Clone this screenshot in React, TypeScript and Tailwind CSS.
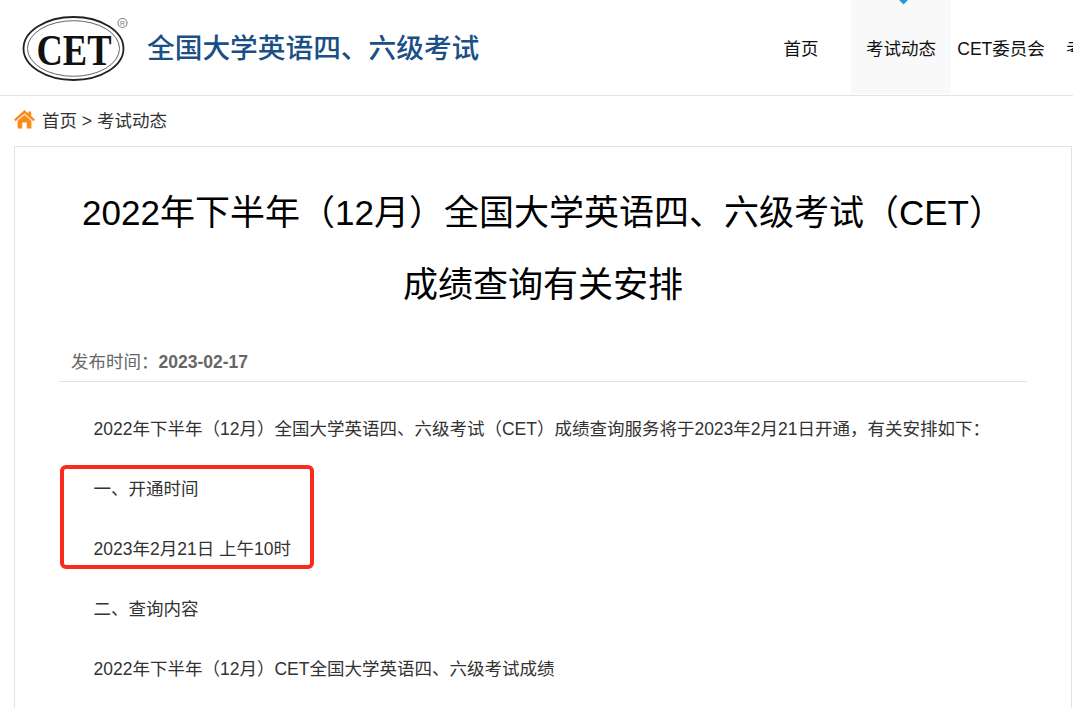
const NAV = ["首页", "考试动态", "CET委员会", "考试介绍"];

function Logo() {
  return (
    <svg width="112" height="72" viewBox="0 0 112 72" className="shrink-0">
      <ellipse cx="51.5" cy="35.5" rx="50" ry="31.5" fill="#fff" stroke="#222" strokeWidth="1.8" />
      <ellipse cx="51.5" cy="35.5" rx="46" ry="27.8" fill="#fff" stroke="#666" strokeWidth="1" />
      <text x="52" y="51.5" textAnchor="middle" fontFamily="'Liberation Serif', serif" fontWeight="700" fontSize="44" fill="#111" textLength="75" lengthAdjust="spacingAndGlyphs">CET</text>
      <circle cx="100.5" cy="10" r="4.5" fill="#fff" stroke="#888" strokeWidth="1.2" />
      <text x="100.5" y="12.8" textAnchor="middle" fontFamily="'Liberation Sans', sans-serif" fontSize="7" fill="#777">R</text>
    </svg>
  );
}

function HomeIcon() {
  return (
    <svg width="21" height="19" viewBox="0 0 21 19" className="shrink-0">
      <path d="M10.5 0 L0 9.4 L1.6 11.2 L10.5 3.4 L19.4 11.2 L21 9.4 L17.2 6 V1.4 H14.4 V3.5 Z" fill="#fb8c1c" />
      <path d="M10.5 4.8 L3.6 10.8 V18.5 H8.2 V12.6 H12.8 V18.5 H17.4 V10.8 Z" fill="#fb8c1c" />
    </svg>
  );
}

export default function App() {
  return (
    <div className="relative h-[708px] w-[1073px] overflow-hidden bg-white font-['Liberation_Sans','Noto_Sans_CJK_SC',sans-serif]">
      <header className="flex h-[96px] border-b border-[#e3e3e3]">
        <div className="flex w-[751px] shrink-0 items-center pl-[22px] pt-[2px]">
          <Logo />
          <span className="ml-[13px] whitespace-nowrap text-[27.7px] font-medium leading-none text-[#1a5086]">全国大学英语四、六级考试</span>
        </div>
        <nav className="flex text-[17.5px] text-[#111]">
          {NAV.map((n, i) => (
            <div
              key={n}
              className={`relative flex h-[94px] w-[100px] shrink-0 items-center justify-center whitespace-nowrap pt-[4px] ${i === 1 ? "bg-[#f9f9f9]" : ""}`}
            >
              {i === 1 && <span className="absolute left-[49px] top-[-4px] h-[7px] w-[7px] rotate-45 bg-[#1f9be0]" />}
              {n}
            </div>
          ))}
        </nav>
      </header>

      <div className="flex h-[50px] items-center gap-[7px] pl-[14px] text-[17.5px] text-[#333]">
        <span className="-mt-[4px]"><HomeIcon /></span>
        <span>首页 &gt; 考试动态</span>
      </div>

      <main className="ml-[14px] min-h-[700px] w-[1058px] border border-[#e3e3e3] px-[44px]">
        <h1 className="pt-[30px] text-center text-[35px] font-normal leading-[72px] text-black">
          2022年下半年（12月）全国大学英语四、六级考试（CET）
          <br />
          成绩查询有关安排
        </h1>
        <div className="mt-[18px] h-[43px] border-b border-[#e0e0e0] pl-[12px] text-[17.5px] leading-[46px] text-[#666]">
          发布时间：<b className="font-bold">2023-02-17</b>
        </div>
        <div className="pt-[17px] indent-[34.5px] text-[17.5px] leading-[60px] text-[#333]">
          <p className="whitespace-nowrap">2022年下半年（12月）全国大学英语四、六级考试（CET）成绩查询服务将于2023年2月21日开通，有关安排如下：</p>
          <p>一、开通时间</p>
          <p>2023年2月21日 上午10时</p>
          <p>二、查询内容</p>
          <p>2022年下半年（12月）CET全国大学英语四、六级考试成绩</p>
        </div>
      </main>

      <div className="absolute left-[60px] top-[465px] h-[104px] w-[254px] rounded-[6px] border-[4px] border-[#fb2a1e]" />
    </div>
  );
}
